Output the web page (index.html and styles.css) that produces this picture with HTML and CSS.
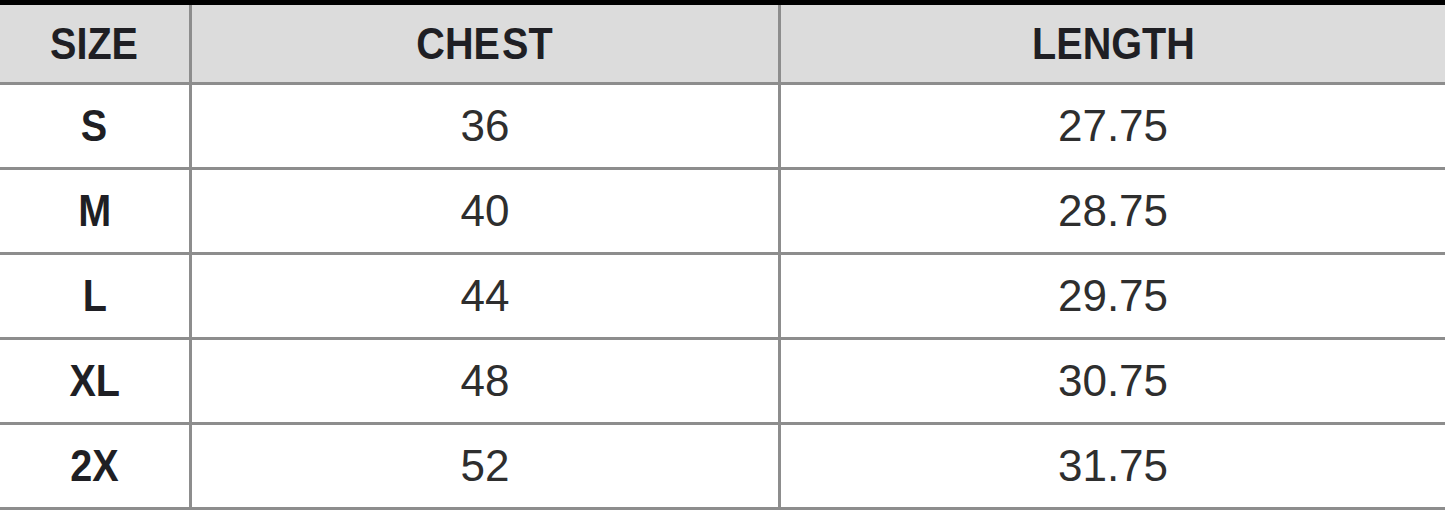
FILE: index.html
```html
<!DOCTYPE html>
<html>
<head>
<meta charset="utf-8">
<link rel="stylesheet" href="styles.css">
</head>
<body>
<div class="topbar"></div>
<table class="chart">
  <thead>
    <tr>
      <th class="c-size"><span class="cond">SIZE</span></th>
      <th class="c-chest"><span class="cond">CHE ST</span></th>
      <th class="c-length"><span class="cond">LENGTH</span></th>
    </tr>
  </thead>
  <tbody>
    <tr><td class="size"><span class="cond">S</span></td><td>36</td><td>27.75</td></tr>
    <tr><td class="size"><span class="cond">M</span></td><td>40</td><td>28.75</td></tr>
    <tr><td class="size"><span class="cond">L</span></td><td>44</td><td>29.75</td></tr>
    <tr><td class="size"><span class="cond">XL</span></td><td>48</td><td>30.75</td></tr>
    <tr><td class="size"><span class="cond">2X</span></td><td>52</td><td>31.75</td></tr>
  </tbody>
</table>
</body>
</html>
```
FILE: styles.css
```css
html, body {
  margin: 0;
  padding: 0;
  background: #ffffff;
}
body {
  font-family: "Liberation Sans", Arial, sans-serif;
  width: 1445px;
  height: 521px;
  overflow: hidden;
}
.topbar {
  height: 5px;
  background: #000000;
}
.chart {
  width: 100%;
  border-collapse: collapse;
  table-layout: fixed;
}
.chart th,
.chart td {
  padding: 0;
  text-align: center;
  vertical-align: middle;
  border: 3px solid #8d8d8d;
}
.chart tr > :first-child { border-left: none; }
.chart tr > :last-child { border-right: none; }
.chart thead th {
  border-top: none;
}
.c-size { width: 189px; }
.c-chest { width: 586px; }
.chart th {
  background: #dcdcdc;
  height: 77px;
  font-weight: bold;
  font-size: 45px;
  color: #1f1f24;
}
.chart td {
  height: 82px;
  font-size: 44px;
  color: #2e2e2e;
}
.chart td.size {
  font-weight: bold;
  font-size: 45px;
  color: #1f1f24;
}
.cond {
  display: inline-block;
  transform: scaleX(0.88);
  white-space: pre;
}
.c-chest .cond { word-spacing: -10px; }
```
